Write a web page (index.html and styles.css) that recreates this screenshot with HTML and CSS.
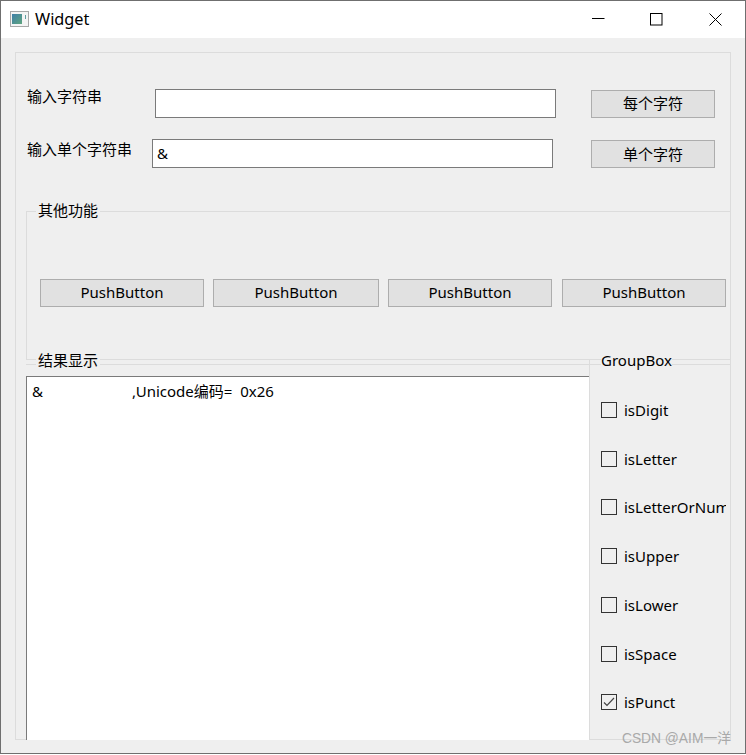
FILE: index.html
```html
<!DOCTYPE html>
<html lang="zh">
<head>
<meta charset="utf-8">
<title>Widget</title>
<link rel="stylesheet" href="styles.css">
</head>
<body>
<div class="window">
  <header class="titlebar">
    <svg class="app-icon" width="19" height="16" viewBox="0 0 19 16">
      <defs><linearGradient id="g" x1="0" y1="0" x2="1" y2="1"><stop offset="0" stop-color="#3f7fa8"/><stop offset="1" stop-color="#5fa57f"/></linearGradient></defs>
      <rect x="0.5" y="0.5" width="18" height="15" fill="#f4f4f4" stroke="#a8a8a8"/>
      <rect x="2" y="3" width="10" height="10" fill="url(#g)"/>
      <rect x="15" y="4" width="1" height="4" fill="#5f9ea0"/>
    </svg>
    <span class="title">Widget</span>
    <div class="controls">
      <div class="control"><svg width="14" height="14" viewBox="0 0 14 14"><path d="M0 5.5H12.5" stroke="#000" fill="none"/></svg></div>
      <div class="control"><svg width="14" height="14" viewBox="0 0 14 14"><rect x="0.5" y="0.5" width="11.5" height="11.5" stroke="#000" fill="none"/></svg></div>
      <div class="control"><svg width="14" height="14" viewBox="0 0 14 14"><path d="M0.5 0.5L12.5 12.5M12.5 0.5L0.5 12.5" stroke="#000" fill="none"/></svg></div>
    </div>
  </header>
  <main class="client">
    <div class="outer">
      <div class="row row-first">
        <label class="row-label label-first">输入字符串</label>
        <input class="field" type="text">
        <button class="btn btn-row">每个字符</button>
      </div>
      <div class="row row-second">
        <label class="row-label label-second">输入单个字符串</label>
        <input class="field" type="text" value="&amp;">
        <button class="btn btn-row">单个字符</button>
      </div>
      <section class="group-tools">
        <span class="legend legend-tools">其他功能</span>
        <div class="tool-buttons">
          <button class="btn btn-tool">PushButton</button>
          <button class="btn btn-tool btn-wide">PushButton</button>
          <button class="btn btn-tool">PushButton</button>
          <button class="btn btn-tool btn-last">PushButton</button>
        </div>
      </section>
      <div class="lower">
        <section class="group-result">
          <span class="legend legend-result">结果显示</span>
          <div class="textedit"><span class="cell">&amp;</span>,Unicode编码= 0x26</div>
        </section>
        <section class="group-side">
          <span class="legend legend-side">GroupBox</span>
          <div class="check-row"><span class="box"></span><span class="check-text">isDigit</span></div>
          <div class="check-row"><span class="box"></span><span class="check-text">isLetter</span></div>
          <div class="check-row"><span class="box"></span><span class="check-text">isLetterOrNum</span></div>
          <div class="check-row"><span class="box"></span><span class="check-text">isUpper</span></div>
          <div class="check-row"><span class="box"></span><span class="check-text">isLower</span></div>
          <div class="check-row"><span class="box"></span><span class="check-text">isSpace</span></div>
          <div class="check-row"><span class="box"><svg width="14" height="14" viewBox="0 0 14 14"><path d="M2 7.5L5 10.5L12 3" stroke="#444" stroke-width="1.2" fill="none"/></svg></span><span class="check-text">isPunct</span></div>
        </section>
      </div>
    </div>
    <div class="watermark">CSDN @AIM一洋</div>
  </main>
</div>
</body>
</html>
```

FILE: styles.css
```css
* {
  box-sizing: border-box;
}

html, body {
  margin: 0;
  padding: 0;
  background: #fff;
}

body {
  width: 746px;
  height: 755px;
  overflow: hidden;
  font-family: "Noto Sans", "Noto Sans CJK SC", sans-serif;
  font-size: 15px;
  line-height: 20px;
  color: #000;
}

.window {
  width: 746px;
  height: 754px;
  border: 1px solid #6f6f6f;
  display: flex;
  flex-direction: column;
}

.titlebar {
  height: 37px;
  flex: none;
  background: #fff;
  display: flex;
  align-items: center;
  padding-left: 9px;
}

.app-icon {
  flex: none;
  margin-top: -1px;
}

.title {
  margin-left: 6px;
  font-size: 16.3px;
  margin-top: -1px;
}

.controls {
  margin-left: auto;
  display: flex;
}

.control {
  width: 58px;
  height: 37px;
  display: flex;
  align-items: flex-start;
  justify-content: center;
  padding-top: 12px;
}

.control:last-child {
  margin-left: 1px;
}

.client {
  position: relative;
  flex: 1;
  background: #efefef;
  padding: 14px 0 0 14px;
}

.outer {
  width: 716px;
  height: 688px;
  border: 1px solid #dcdcdc;
}

.row {
  display: flex;
  align-items: flex-start;
  padding-left: 11px;
}

.row-first {
  margin-top: 36px;
}

.row-second {
  margin-top: 21px;
}

.row-label {
  flex: none;
  white-space: nowrap;
}

.label-first {
  width: 128px;
  margin-top: -3px;
}

.label-second {
  width: 125px;
}

.field {
  flex: none;
  width: 401px;
  height: 29px;
  margin: 0;
  border: 1px solid #7a7a7a;
  border-radius: 0;
  background: #fff;
  padding: 0 4px 2px;
  font: inherit;
  color: #000;
  outline: none;
}

.btn {
  flex: none;
  margin: 0;
  padding: 0 0 2px;
  height: 28px;
  background: #e1e1e1;
  border: 1px solid #adadad;
  border-radius: 0;
  font: inherit;
  color: #000;
}

.btn-row {
  width: 124px;
  margin-top: 1px;
}

.row-first .btn-row {
  margin-left: 35px;
}

.row-second .btn-row {
  margin-left: 38px;
  padding-bottom: 0;
}

.group-tools {
  position: relative;
  width: 704px;
  height: 149px;
  margin: 43px 0 0 10px;
  border: 1px solid #dcdcdc;
  border-right: 0;
  padding: 67px 0 0 13px;
}

.tool-buttons {
  display: flex;
  gap: 9px;
}

.btn-tool {
  width: 164px;
}

.btn-wide {
  width: 166px;
}

.btn-last {
  margin-left: 1px;
}

.legend {
  position: absolute;
  background: #efefef;
  white-space: nowrap;
}

.legend-tools {
  left: 9px;
  top: -12px;
  padding: 0 2px;
}

.lower {
  display: grid;
  grid-template-columns: 563px 141px;
  height: 379px;
  margin-left: 10px;
}

.group-result {
  position: relative;
  margin-top: 4px;
  border-top: 1px solid #dcdcdc;
}

.legend-result {
  left: 10px;
  top: -15px;
  padding: 0 2px;
}

.textedit {
  width: 563px;
  height: 364px;
  margin-top: 11px;
  background: #fff;
  border-top: 1px solid #7a7a7a;
  border-left: 1px solid #7a7a7a;
  padding: 4px 0 0 5px;
  white-space: nowrap;
  word-spacing: 4px;
}

.cell {
  display: inline-block;
  width: 100px;
}

.group-side {
  position: relative;
  border-left: 1px solid #dcdcdc;
  background: linear-gradient(#dcdcdc, #dcdcdc) 0 4px / 100% 1px no-repeat;
  padding: 25.4px 4px 0 11px;
}

.legend-side {
  left: 11px;
  top: -10px;
}

.check-row {
  display: flex;
  align-items: center;
  height: 48.75px;
  overflow: hidden;
}

.box {
  flex: none;
  width: 16px;
  height: 16px;
  border: 1px solid #333;
  background: #efefef;
  display: block;
}

.box svg {
  display: block;
}

.check-text {
  margin-left: 7px;
  white-space: nowrap;
}

.watermark {
  position: absolute;
  right: 14px;
  bottom: 5px;
  color: #a9a9a9;
  font-family: "Liberation Sans", "Noto Sans CJK SC", sans-serif;
  font-size: 13.8px;
  line-height: 18px;
  white-space: nowrap;
}
```
